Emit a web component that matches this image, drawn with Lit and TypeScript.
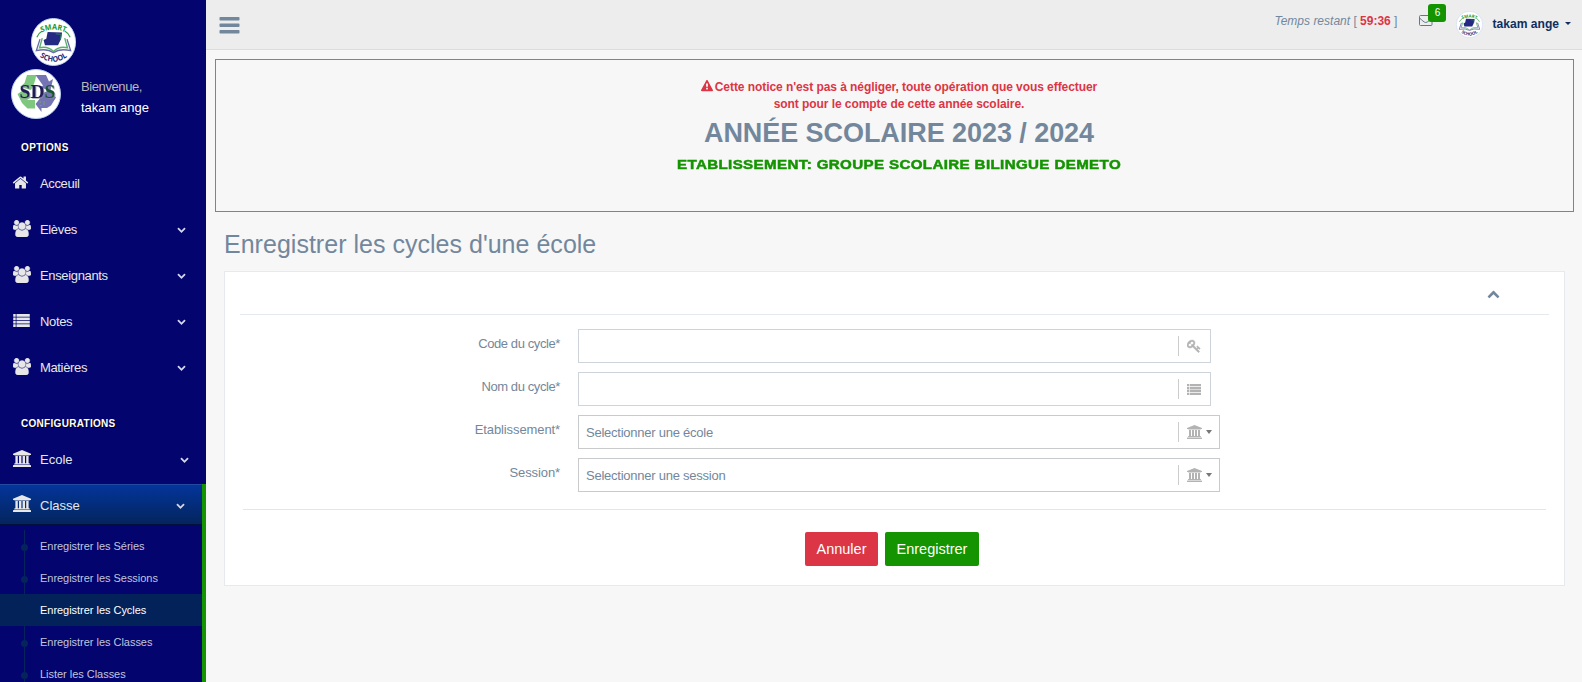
import { LitElement, html, css } from "lit";
import { customElement, property } from "lit/decorators.js";
import { classMap } from "lit/directives/class-map.js";

const PATHS: Record<string, { box: string; d: string }> = {
  home: { box: "0 0 1792 1792", d: "M1472 992v480q0 26-19 45t-45 19h-384v-384h-256v384h-384q-26 0-45-19t-19-45v-480q0-1 .5-3t.5-3l575-474 575 474q1 2 1 6zm223-69l-62 74q-8 9-21 11h-3q-13 0-21-7l-692-577-692 577q-12 8-24 7-13-2-21-11l-62-74q-8-10-7-23.500t11-21.500l719-599q32-26 76-26t76 26l244 204v-195q0-14 9-23t23-9h192q14 0 23 9t9 23v408l219 182q10 8 11 21.500t-7 23.500z" },
  users: { box: "-64 0 1920 1792", d: "M529 896q-162 5-265 128h-134q-82 0-138-40.500t-56-118.500q0-353 124-353 6 0 43.500 21t97.500 42.500 119 21.500q67 0 133-23-5 37-5 66 0 139 81 256zm1071 637q0 120-73 189.500t-194 69.500h-874q-121 0-194-69.500t-73-189.500q0-53 3.500-103.500t14-109 26.500-108.500 43-97.500 62-81 85.500-53.500 111.500-20q10 0 43 21.500t73 48 107 48 135 21.500 135-21.500 107-48 73-48 43-21.500q61 0 111.500 20t85.500 53.500 62 81 43 97.500 26.500 108.500 14 109 3.500 103.500zm-1024-1277q0 106-75 181t-181 75-181-75-75-181 75-181 181-75 181 75 75 181zm704 384q0 159-112.500 271.500t-271.500 112.500-271.500-112.500-112.500-271.500 112.500-271.500 271.500-112.500 271.500 112.500 112.500 271.500zm576 225q0 78-56 118.500t-138 40.500h-134q-103-123-265-128 81-117 81-256 0-29-5-66 66 23 133 23 59 0 119-21.500t97.500-42.500 43.500-21q124 0 124 353zm-128-609q0 106-75 181t-181 75-181-75-75-181 75-181 181-75 181 75 75 181z" },
  list: { box: "0 192 1792 1408", d: "M0 200h270v290h-270zM350 200h1442v290h-1442zM0 570h270v290h-270zM350 570h1442v290h-1442zM0 940h270v290h-270zM350 940h1442v290h-1442zM0 1310h270v290h-270zM350 1310h1442v290h-1442z" },
  bank: { box: "-64 0 1920 1792", d: "M896 0l960 384v128h-128q0 26-20.500 45t-48.500 19h-1526q-28 0-48.500-19t-20.500-45h-128v-128zm-704 640h256v768h128v-768h256v768h128v-768h256v768h128v-768h256v768h59q28 0 48.500 19t20.500 45v64h-1664v-64q0-26 20.500-45t48.500-19h59v-768zm1595 960q28 0 48.500 19t20.500 45v128h-1920v-128q0-26 20.500-45t48.500-19h1782z" },
  down: { box: "0 0 1792 1792", d: "M1683 808l-742 741q-19 19-45 19t-45-19l-742-741q-19-19-19-45.500t19-45.500l166-165q19-19 45-19t45 19l531 531 531-531q19-19 45-19t45 19l166 165q19 19 19 45.500t-19 45.500z" },
  warn: { box: "0 0 1792 1792", d: "M1024 1375v-190q0-14-9.500-23.500t-22.500-9.500h-192q-13 0-22.500 9.500t-9.500 23.500v190q0 14 9.500 23.500t22.500 9.500h192q13 0 22.500-9.500t9.500-23.500zm-2-374l18-459q0-12-10-19-13-11-24-11h-220q-11 0-24 11-10 7-10 21l17 457q0 10 10 16.500t24 6.500h185q14 0 23.500-6.500t10.500-16.500zm-14-934l768 1408q35 63-2 126-17 29-46.500 46t-63.500 17h-1536q-34 0-63.500-17t-46.500-46q-37-63-2-126l768-1408q17-31 47-49t65-18 65 18 47 49z" },
  key: { box: "0 0 1792 1792", d: "M832 512q0-80-56-136t-136-56-136 56-56 136q0 42 19 83-41-19-83-19-80 0-136 56t-56 136 56 136 136 56 136-56 56-136q0-42-19-83 41 19 83 19 80 0 136-56t56-136zm851 704q0 17-49 66t-66 49q-9 0-28.500-16t-36.500-33-38.500-40-24.500-26l-96 96 220 220q28 28 28 68 0 42-39 81t-81 39q-40 0-68-28l-671-671q-176 131-365 131-163 0-265.500-102.500t-102.500-265.500q0-160 95-313t248-248 313-95q163 0 265.500 102.500t102.500 265.500q0 189-131 365l355 355 96-96q-3-3-26-24.500t-40-38.500-33-36.500-16-28.500q0-17 49-66t66-49q13 0 23 10 6 6 46 44.500t82 79.500 86.500 86 73 78 28.500 41z" },
  bars: { box: "0 0 20 18", d: "M.8 1h18.400q.8 0 .8.800v1.900q0 .8-.8.800h-18.400q-.8 0-.8-.8v-1.900q0-.8.800-.8zM.8 7.500h18.400q.8 0 .8.800v1.900q0 .8-.8.800h-18.400q-.8 0-.8-.8v-1.900q0-.8.800-.8zM.8 14h18.400q.8 0 .8.800v1.900q0 .8-.8.800h-18.400q-.8 0-.8-.8v-1.900q0-.8.800-.8z" },
};

const icon = (name: string) =>
  html`<svg class="ic ${name}" viewBox=${PATHS[name].box}><path fill="currentColor" d=${PATHS[name].d} /></svg>`;

@customElement("school-logo")
class SchoolLogo extends LitElement {
  static styles = css`
    :host { display: block; }
    svg { display: block; width: 100%; height: 100%; }
    text { font: bold 16px "Open Sans", sans-serif; }
  `;
  render() {
    return html`<svg viewBox="0 0 100 100" preserveAspectRatio="none">
      <circle cx="50" cy="50" r="49" fill="#fff" stroke="#c3d3f2" stroke-width="2" />
      <defs>
        <path id="top" d="M20 32Q50 16 80 32" />
        <path id="bottom" d="M12 75Q50 107 88 75" />
      </defs>
      <text fill="#189a2c" text-anchor="middle"><textPath href="#top" startOffset="50%">SMART</textPath></text>
      <text fill="#2b2c74" text-anchor="middle"><textPath href="#bottom" startOffset="50%">SCHOOL</textPath></text>
      <path d="M13 40Q17 31 25 27M75 27Q83 31 87 40" fill="none" stroke="#2f9a45" stroke-width="2.500" />
      <path d="M20 44L12 68Q36 63 50 72Q64 63 88 68L80 44" fill="none" stroke="#6a6ca8" stroke-width="3" />
      <path d="M25 42L19 62Q38 58 50 70Q62 58 81 62L75 42" fill="none" stroke="#58b06c" stroke-width="3" />
      <path d="M37 29L69 30L67 43L60 57L31 57L28 46L34 43Z" fill="#242a84" />
      <path d="M55 33L67 34L65 45" fill="none" stroke="#2f7d62" stroke-width="2" />
    </svg>`;
  }
}

@customElement("sds-avatar")
class SdsAvatar extends LitElement {
  static styles = css`
    :host { display: block; }
    svg { display: block; width: 100%; height: 100%; }
    text { font: bold 39px "Liberation Serif", serif; filter: drop-shadow(2px 2px 0 #8a8a9a99); }
  `;
  render() {
    return html`<svg viewBox="0 0 100 100">
      <circle cx="50" cy="50" r="49" fill="#fff" stroke="#b9cdf2" stroke-width="2" />
      <path d="M32 12H51L46 30L40 42L18 36L27 28Z" fill="#7fc77f" />
      <path d="M49 12H70L76 25L84 20L79 42L59 38L64 33Z" fill="#7474b4" />
      <path d="M13 50L28 40L40 57L32 62L48 62V79H33L22 68Z" fill="#7fc77f" />
      <path d="M76 42L90 57L80 73L72 78H61V86L49 70L61 55V50Z" fill="#7474b4" />
      <text x="53" y="57" text-anchor="middle" fill="#211b55">SD<tspan fill="#17562f">S</tspan></text>
      <path d="M57 66h3M65 66h3M58 73h3M64 70h3" stroke="#79a858" stroke-width="2" />
    </svg>`;
  }
}

@customElement("side-menu")
class SideMenu extends LitElement {
  static styles = css`
    :host { display: block; width: 206px; height: 682px; overflow: hidden; background: #03046e; color: #e7e7e7; }
    .ic { display: block; }
    .brand { padding: 18px 0 0 31px; height: 48px; }
    .brand school-logo { width: 45px; height: 48px; }
    .profile { display: flex; margin-top: 3px; padding-left: 11px; height: 50px; }
    .profile sds-avatar { width: 50px; height: 50px; }
    .who { padding: 10px 0 0 20px; font-size: 13px; line-height: 15px; }
    .hello { color: #bab8b8; letter-spacing: -.4px; }
    .name { margin-top: 6px; color: #fff; }
    h3 { margin: 0; padding-left: 21px; font-size: 10px; line-height: 12px; letter-spacing: .3px; color: #fff; text-shadow: 1px 1px #000; font-weight: bold; }
    .options { margin-top: 23px; letter-spacing: .4px; }
    .config { margin-top: 31px; margin-bottom: 9px; }
    .rows { padding-top: 9px; letter-spacing: -.35px; }
    .item { display: flex; align-items: center; box-sizing: border-box; height: 40px; margin-bottom: 6px; padding: 1px 20px 0 13px; font-size: 13px; }
    .glyph { width: 27px; flex: none; margin-top: -3px; }
    .label { flex: 1; }
    .home { width: 17px; height: 17px; margin-left: -1px; }
    .users, .bank { width: 18px; height: 17px; }
    .users path { stroke: currentColor; stroke-width: 36px; }
    .list { width: 17px; height: 13px; }
    .down { width: 9px; height: 9px; color: #d6d8ea; }
    .wide { padding-right: 17px; margin-bottom: 5px; }
    .open { height: 200px; border-right: 4px solid #149400; }
    .open .item { height: 41px; margin: 0; padding-right: 17px; border-top: 1px solid #2349a0; border-bottom: 1px solid #02103f; background: linear-gradient(#03359a, #04245c); }
    .sub { display: flex; align-items: center; height: 32px; font-size: 11px; color: #c1c4dc; letter-spacing: -.03px; }
    .first { margin-top: 5px; }
    .rail { width: 25px; height: 32px; margin-right: 15px; display: grid; justify-items: end; align-items: center; background: linear-gradient(#04245c, #04245c) 24px 0 / 1px 100% no-repeat; }
    .dot { width: 7px; height: 7px; border-radius: 50%; background: #04245c; margin-right: -3px; margin-top: 2px; }
    .current { background: #04225a; color: #fff; }
    .current .rail { visibility: hidden; }
  `;
  render() {
    const row = (ic: string, label: string, arrow = true, extra = "") => html`
      <div class="item ${extra}"><span class="glyph">${icon(ic)}</span><span class="label">${label}</span>${arrow ? icon("down") : ""}</div>`;
    const subs = ["Enregistrer les Séries", "Enregistrer les Sessions", "Enregistrer les Cycles", "Enregistrer les Classes", "Lister les Classes"];
    return html`
      <div class="brand"><school-logo></school-logo></div>
      <div class="profile"><sds-avatar></sds-avatar><div class="who"><div class="hello">Bienvenue,</div><div class="name">takam ange</div></div></div>
      <h3 class="options">OPTIONS</h3>
      <div class="rows">
        ${row("home", "Acceuil", false)} ${row("users", "Elèves")} ${row("users", "Enseignants")} ${row("list", "Notes")} ${row("users", "Matières")}
      </div>
      <h3 class="config">CONFIGURATIONS</h3>
      ${row("bank", "Ecole", true, "wide")}
      <div class="open">
        ${row("bank", "Classe")}
        ${subs.map((s, i) => html`<div class=${classMap({ sub: true, first: i === 0, current: i === 2 })}><span class="rail"><i class="dot"></i></span><span>${s}</span></div>`)}
      </div>`;
  }
}

@customElement("form-row")
class FormRow extends LitElement {
  @property() label = "";
  @property() value = "";
  @property() glyph = "";
  @property({ type: Boolean }) select = false;
  static styles = css`
    :host { display: flex; height: 34px; margin-bottom: 9px; color: #73879c; font-size: 13px; }
    .label { width: 338px; padding-right: 18px; text-align: right; line-height: 15px; padding-top: 7px; box-sizing: border-box; letter-spacing: -.4px; }
    .loose { letter-spacing: -.1px; }
    .box { box-sizing: border-box; width: 633px; height: 34px; border: 1px solid #ced4da; background: #fff; display: flex; align-items: center; padding-left: 7px; }
    .select { width: 642px; border-color: #c8cacc; }
    .value { width: 592px; letter-spacing: -.24px; }
    .mark { display: flex; align-items: center; height: 20px; border-left: 1px solid #ccc; padding-left: 8px; color: #b3b3b3; }
    .ic { display: block; width: 15px; height: 14px; }
    .bank { margin-left: -.5px; }
    .key { width: 14px; height: 14px; }
    .key path { stroke: currentColor; stroke-width: 50px; }
    .list { width: 14px; height: 11px; }
    .caret { margin: -1px 0 0 4.500px; border: 3px solid transparent; border-top: 4px solid #777; border-bottom: 0; }
  `;
  render() {
    return html`<div class=${classMap({ label: true, loose: this.select })}>${this.label}</div>
      <div class=${classMap({ box: true, select: this.select })}>
        <span class="value">${this.value}</span>
        <span class="mark">${icon(this.glyph)}${this.select ? html`<i class="caret"></i>` : ""}</span>
      </div>`;
  }
}

@customElement("app-root")
class AppRoot extends LitElement {
  static styles = css`
    :host { display: flex; width: 1582px; height: 682px; overflow: hidden; background: #f7f7f7; font-family: "Liberation Sans", Arial, sans-serif; font-size: 13px; color: #73879c; }
    .main { flex: 1; min-width: 0; }
    .top { display: flex; box-sizing: border-box; height: 50px; background: #ededed; border-bottom: 1px solid #d9dee4; padding-left: 13px; }
    .bars { width: 21px; height: 18px; margin-top: 16px; }
    .timer { margin-left: auto; padding-top: 13px; line-height: 16px; font-size: 12px; white-space: nowrap; }
    .timer b { color: #dc3545; }
    .mail { position: relative; width: 14px; height: 12px; margin: 15px 0 0 22px; }
    .mail svg { display: block; }
    .badge { position: absolute; left: 9px; top: -11px; width: 18px; height: 18px; border-radius: 3px; background: #149400; color: #fff; font-size: 10px; line-height: 17px; text-align: center; }
    .face { width: 27px; height: 27px; margin: 11px 9px 0 23px; }
    .user { color: #0f2f5f; font-weight: bold; font-size: 12.100px; line-height: 16px; padding-top: 16px; }
    .drop { margin: 22px 11px 0 6px; height: 0; border: 3px solid transparent; border-top: 3px solid #0f2f5f; border-bottom: 0; }
    .notice { box-sizing: border-box; height: 153px; margin: 9px 8px 0 9px; border: 1px solid #73879c; padding-top: 19px; padding-left: 9px; text-align: center; }
    .alert { color: #dc3545; font-weight: bold; font-size: 12px; line-height: 17px; letter-spacing: -.065px; }
    .warn { width: 12px; height: 12px; vertical-align: -1px; margin-right: 2px; }
    .year { font-size: 27px; font-weight: bold; line-height: 32px; margin-top: 4px; letter-spacing: -.06px; }
    .school { font-size: 13.500px; line-height: 18px; font-weight: 900; color: #149400; margin-top: 7px; transform: scaleX(1.12); letter-spacing: .33px; -webkit-text-stroke: .5px #149400; }
    h1 { margin: 16px 0 0 18px; font-size: 25px; font-weight: normal; line-height: 32px; letter-spacing: .02px; }
    .card { box-sizing: border-box; height: 315px; margin: 11px 17px 0 18px; background: #fff; border: 1px solid #e6e9ed; padding: 0 15px; }
    .head { height: 42px; border-bottom: 1px solid #e6e9ed; display: flex; justify-content: flex-end; padding-right: 49px; }
    .head .down { width: 13px; height: 13px; transform: rotate(180deg); margin-top: 17px; }
    .form { padding-top: 14px; }
    .rule { height: 1px; margin: 17px 3px 0; background: #e3e5e8; }
    .actions { display: flex; justify-content: center; gap: 7px; margin-top: 22px; }
    .btn { height: 34px; border-radius: 2px; color: #fff; font-size: 14.500px; line-height: 34px; text-align: center; }
    .cancel { width: 73px; background: #dc3545; }
    .save { width: 94px; background: #149400; margin-right: 5px; }
  `;
  render() {
    return html`
      <side-menu></side-menu>
      <div class="main">
        <div class="top">
          ${icon("bars")}
          <div class="timer"><i>Temps restant</i> [ <b>59:36</b> ]</div>
          <div class="mail">
            <svg width="14" height="12" viewBox="0 0 14 12" fill="none" stroke="#5f7890"><rect x=".5" y=".5" width="12.500" height="10" rx="1" /><path d="M.5 3C3 5 5 7.500 6.700 7.500S11 5 13 3" /></svg>
            <span class="badge">6</span>
          </div>
          <school-logo class="face"></school-logo>
          <span class="user">takam ange</span><i class="drop"></i>
        </div>
        <div class="notice">
          <div class="alert">${icon("warn")}Cette notice n'est pas à négliger, toute opération que vous effectuer<br />sont pour le compte de cette année scolaire.</div>
          <div class="year">ANNÉE SCOLAIRE 2023 / 2024</div>
          <div class="school">ETABLISSEMENT: GROUPE SCOLAIRE BILINGUE DEMETO</div>
        </div>
        <h1>Enregistrer les cycles d'une école</h1>
        <div class="card">
          <div class="head">${icon("down")}</div>
          <div class="form">
            <form-row label="Code du cycle*" glyph="key"></form-row>
            <form-row label="Nom du cycle*" glyph="list"></form-row>
            <form-row label="Etablissement*" value="Selectionner une école" glyph="bank" select></form-row>
            <form-row label="Session*" value="Selectionner une session" glyph="bank" select></form-row>
          </div>
          <div class="rule"></div>
          <div class="actions"><div class="btn cancel">Annuler</div><div class="btn save">Enregistrer</div></div>
        </div>
      </div>`;
  }
}
